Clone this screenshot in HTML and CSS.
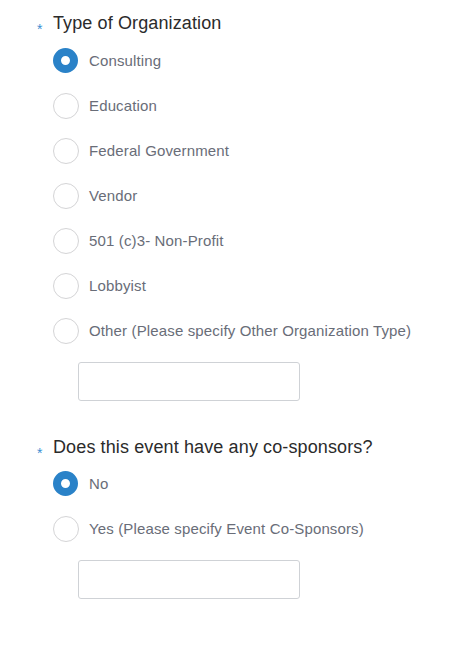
FILE: index.html
```html
<!DOCTYPE html>
<html>
<head>
<meta charset="utf-8">
<link rel="stylesheet" href="styles.css">
</head>
<body>
<div class="form">
  <div class="question q1">
    <div class="title"><span class="req">*</span><span class="title-text">Type of Organization</span></div>
    <div class="options">
      <div class="option"><span class="radio checked"></span><span class="label">Consulting</span></div>
      <div class="option"><span class="radio"></span><span class="label">Education</span></div>
      <div class="option"><span class="radio"></span><span class="label">Federal Government</span></div>
      <div class="option"><span class="radio"></span><span class="label">Vendor</span></div>
      <div class="option"><span class="radio"></span><span class="label">501 (c)3- Non-Profit</span></div>
      <div class="option"><span class="radio"></span><span class="label">Lobbyist</span></div>
      <div class="option"><span class="radio"></span><span class="label">Other (Please specify Other Organization Type)</span></div>
    </div>
    <div class="field"></div>
  </div>
  <div class="question q2">
    <div class="title"><span class="req">*</span><span class="title-text">Does this event have any co-sponsors?</span></div>
    <div class="options">
      <div class="option"><span class="radio checked"></span><span class="label">No</span></div>
      <div class="option"><span class="radio"></span><span class="label">Yes (Please specify Event Co-Sponsors)</span></div>
    </div>
    <div class="field"></div>
  </div>
</div>
</body>
</html>
```
FILE: styles.css
```css
html, body {
  margin: 0;
  padding: 0;
  background: #fff;
}
body {
  font-family: Arial, "Liberation Sans", sans-serif;
}
.form {
  padding: 11px 0 0 36px;
}
.question.q2 {
  margin-top: 34px;
}
.title {
  display: flex;
  align-items: flex-start;
  height: 24px;
  line-height: 24px;
}
.req {
  width: 17px;
  color: #3a8fd2;
  font-size: 14px;
  line-height: 14px;
  margin-top: 11px;
  padding-left: 1px;
  box-sizing: border-box;
}
.title-text {
  font-size: 18px;
  letter-spacing: 0.12px;
  color: #2b2b2b;
}
.options {
  margin-left: 17px;
  margin-top: 3px;
}
.q2 .options {
  margin-top: 2px;
}
.option {
  display: flex;
  align-items: center;
  height: 45px;
}
.q2 .option {
  height: 45px;
}
.radio {
  width: 26px;
  height: 26px;
  box-sizing: border-box;
  border: 1px solid #d4d4d6;
  border-radius: 50%;
  margin-right: 10px;
  flex: none;
  background: #fff;
}
.radio.checked {
  border: 8px solid #2a82c8;
  background: #fff;
  width: 25px;
  height: 25px;
  margin-left: 0;
  margin-right: 11px;
}
.label {
  font-size: 15px;
  letter-spacing: 0.14px;
  color: #696d78;
}
.field {
  margin-left: 42px;
  margin-top: 9px;
  width: 222px;
  height: 39px;
  box-sizing: border-box;
  border: 1px solid #cfd2d6;
  border-radius: 3px;
}
.q2 .field {
  margin-top: 9px;
}
```
